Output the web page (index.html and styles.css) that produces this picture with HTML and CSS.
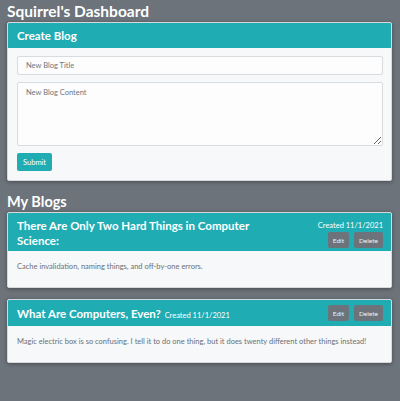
FILE: index.html
```html
<!DOCTYPE html>
<html>
<head>
<meta charset="utf-8">
<link rel="stylesheet" href="styles.css">
</head>
<body>
<div class="page">
  <h1 class="page-title">Squirrel's Dashboard</h1>
  <section class="card">
    <div class="card-header"><h2 class="card-title">Create Blog</h2></div>
    <div class="card-body form-body">
      <input class="field" type="text" placeholder="New Blog Title">
      <textarea class="field area" placeholder="New Blog Content"></textarea>
      <div><button class="btn-submit">Submit</button></div>
    </div>
  </section>

  <h1 class="section-title">My Blogs</h1>

  <section class="card">
    <div class="card-header blog-header">
      <h2 class="blog-title">There Are Only Two Hard Things in Computer Science:</h2>
      <div class="meta">
        <span class="created">Created 11/1/2021</span>
        <div class="actions"><button class="btn-sm">Edit</button><button class="btn-sm">Delete</button></div>
      </div>
    </div>
    <div class="card-body blog-body">Cache invalidation, naming things, and off-by-one errors.</div>
  </section>

  <section class="card">
    <div class="card-header blog-header single">
      <h2 class="blog-title">What Are Computers, Even? <span class="created inline">Created 11/1/2021</span></h2>
      <div class="actions"><button class="btn-sm">Edit</button><button class="btn-sm">Delete</button></div>
    </div>
    <div class="card-body blog-body">Magic electric box is so confusing. I tell it to do one thing, but it does twenty different other things instead!</div>
  </section>
</div>
</body>
</html>
```
FILE: styles.css
```css
html, body {
  margin: 0;
  padding: 0;
  background: #6c737a;
  font-family: "Lato", "Open Sans", sans-serif;
}
.page {
  padding: 0 8px 0 7px;
}
.page-title {
  margin: 0;
  color: #fff;
  font-size: 15.5px;
  font-weight: 700;
  line-height: 22px;
  height: 22px;
}
.section-title {
  margin: 4px 0 0 0;
  color: #fff;
  font-size: 14.5px;
  font-weight: 700;
  line-height: 20px;
  height: 20px;
}
.card {
  background: #f7f8f9;
  border: 1px solid #d6d9dc;
  border-radius: 2px;
  box-shadow: 0 1px 4px rgba(0,0,0,0.35);
  margin-bottom: 11px;
  overflow: hidden;
}
.card-header {
  background: #20acb3;
  color: #fff;
  padding: 0 9px;
}
.card-title {
  margin: 0;
  font-size: 11.5px;
  font-weight: 700;
  line-height: 25px;
}
.form-body {
  padding: 8px 8px 9px 9px;
  display: flex;
  flex-direction: column;
  gap: 7px;
}
.field {
  box-sizing: border-box;
  width: 100%;
  border: 1px solid #d9dcdf;
  border-radius: 2px;
  background: #fdfdfe;
  font-family: "Lato", sans-serif;
  font-size: 7.5px;
  color: #555;
  padding: 0 8px;
  height: 19px;
  margin: 0;
}
.field::placeholder { color: #70767c; }
.area {
  height: 64px;
  padding-top: 5px;
  resize: vertical;
  display: block;
}
.btn-submit {
  display: block;
  background: #20acb3;
  color: #fff;
  border: 0;
  border-radius: 2px;
  font-family: "Lato", sans-serif;
  font-size: 7.5px;
  height: 18px;
  padding: 0 6px;
}
.blog-header {
  display: flex;
  justify-content: space-between;
  align-items: flex-start;
  padding: 5px 8px 3px 9px;
}
.blog-title {
  margin: 0;
  font-size: 11.5px;
  font-weight: 700;
  line-height: 15px;
  width: 250px;
}
.meta {
  display: flex;
  flex-direction: column;
  align-items: flex-end;
  gap: 1px;
  padding-top: 2px;
}
.created {
  font-size: 7.5px;
  font-weight: 400;
  line-height: 11px;
}
.created.inline { margin-left: 1px; }
.actions {
  display: flex;
  gap: 5px;
}
.btn-sm {
  background: #6c737a;
  color: #eef0f1;
  border: 0;
  border-radius: 2px;
  font-family: "Lato", sans-serif;
  font-size: 6.5px;
  height: 16px;
  padding: 0 5px;
}
.single {
  align-items: center;
  padding: 5px 8px 5px 9px;
}
.single .blog-title { width: auto; }
.blog-body {
  padding: 10px 9px 14px 9px;
  font-size: 7.5px;
  color: #6a7075;
  line-height: 12px;
}
```
